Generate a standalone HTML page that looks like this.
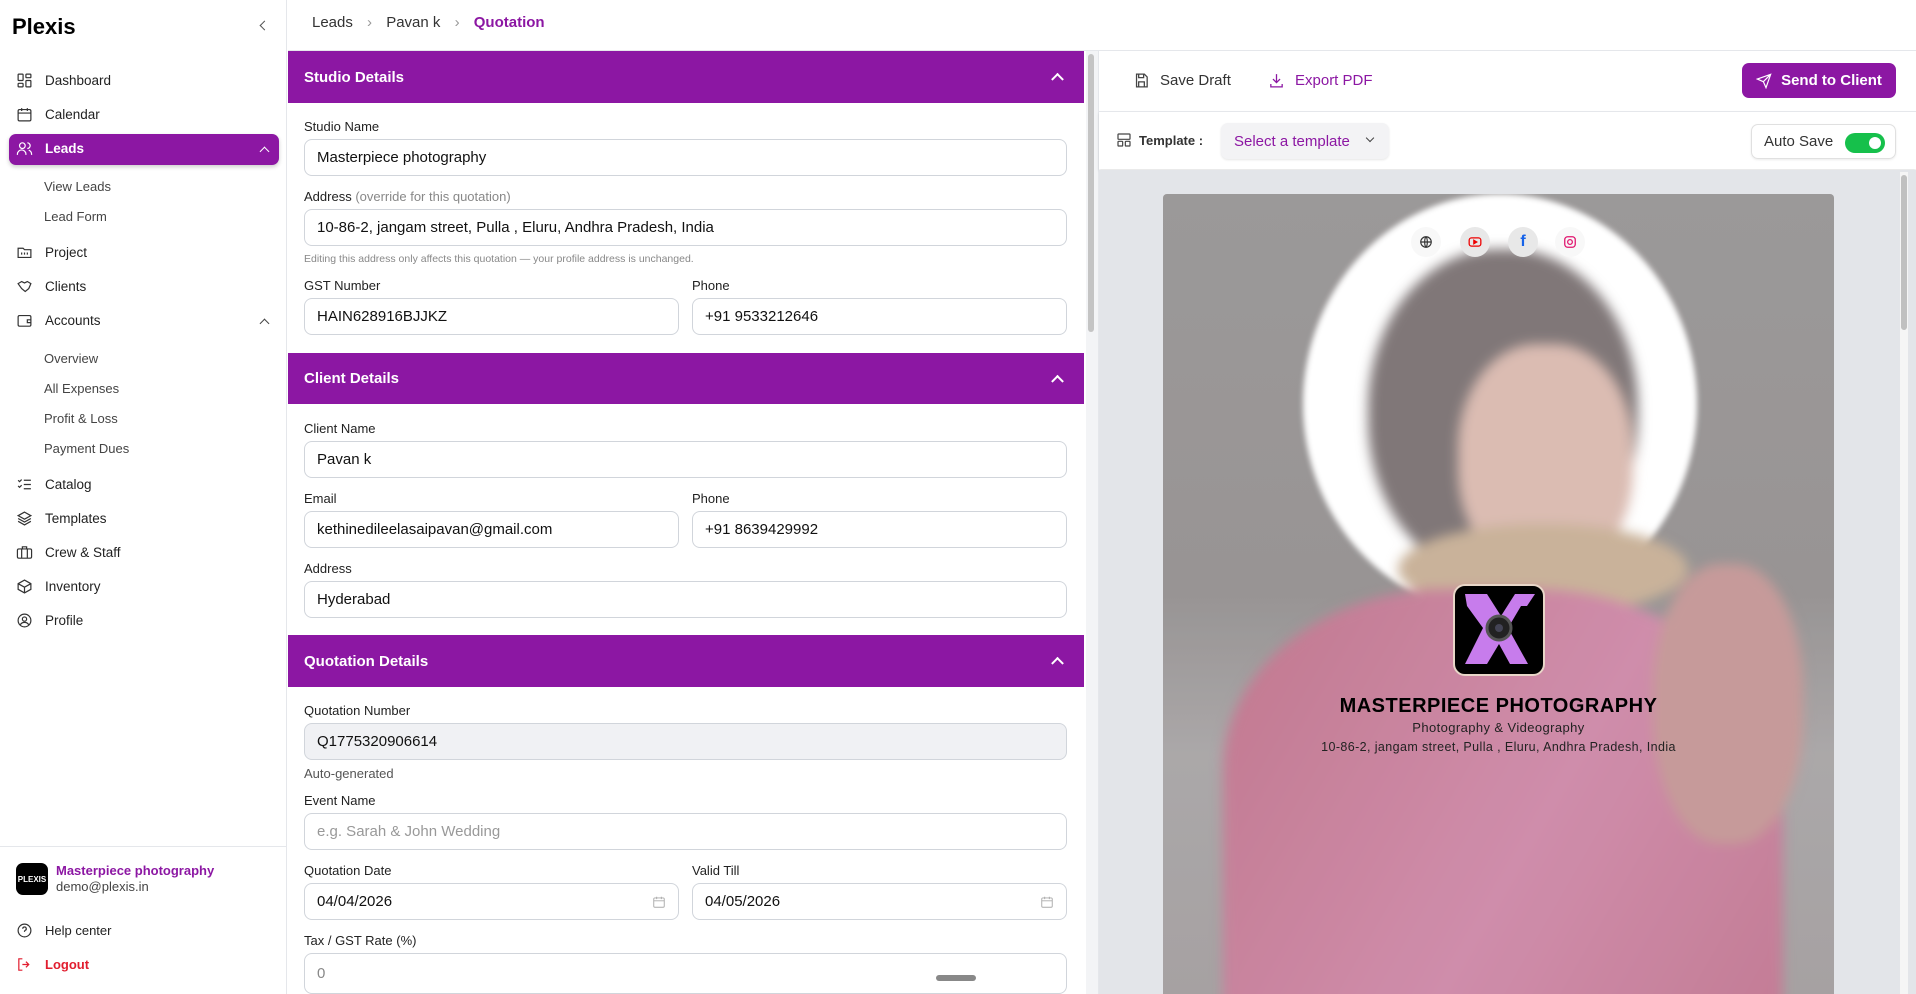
<!DOCTYPE html>
<html><head><meta charset="utf-8"><style>
*{box-sizing:border-box;margin:0;padding:0}
html,body{width:1916px;height:994px;overflow:hidden}
body{background:#fff;font-family:"Liberation Sans",sans-serif;color:#1f2937;position:relative}
.a{position:absolute}
.nav{position:absolute;left:16px;font-size:13.5px;color:#222;display:flex;align-items:center;gap:12px}
.nav svg{width:17px;height:17px;fill:none;stroke:#333;stroke-width:1.7}
.sub{position:absolute;left:44px;font-size:13px;color:#444}
.lbl{position:absolute;font-size:13px;color:#222}
.in{position:absolute;height:37px;border:1px solid #d1d5db;border-radius:8px;font-size:15px;padding:0 12px;display:flex;align-items:center;color:#111;background:#fff}
.sec{position:absolute;left:288px;width:796px;background:#8c17a3;color:#fff;font-weight:bold;font-size:15px;padding-left:16px;display:flex;align-items:center}
.sec:after{content:"";position:absolute;right:22px;top:50%;width:7px;height:7px;border-left:2px solid #fff;border-top:2px solid #fff;transform:translateY(-25%) rotate(45deg)}
</style></head><body>
<div class="a" style="left:0;top:0;width:287px;height:994px;border-right:1px solid #e5e7eb;background:#fff"></div>
<div class="a" style="left:12px;top:14px;font-size:22px;font-weight:bold;color:#000">Plexis</div>
<div class="a" style="left:261px;top:22px;width:7px;height:7px;border-left:1.5px solid #555;border-bottom:1.5px solid #555;transform:rotate(45deg)"></div>
<div class="nav" style="top:72px"><svg viewBox="0 0 24 24"><rect x="3" y="3" width="7" height="9" rx="1"/><rect x="14" y="3" width="7" height="5" rx="1"/><rect x="14" y="12" width="7" height="9" rx="1"/><rect x="3" y="16" width="7" height="5" rx="1"/></svg>Dashboard</div>
<div class="nav" style="top:106px"><svg viewBox="0 0 24 24"><rect x="3" y="5" width="18" height="16" rx="2"/><path d="M3 10h18M8 3v4M16 3v4"/></svg>Calendar</div>
<div class="a" style="left:9px;top:134px;width:270px;height:31px;background:#8c17a3;border-radius:7px;box-shadow:0 2px 4px rgba(0,0,0,.2)"></div>
<div class="nav" style="top:140px;color:#fff;font-weight:bold"><svg viewBox="0 0 24 24" style="stroke:#fff"><circle cx="9" cy="8" r="4"/><path d="M2 21v-1a6 6 0 0 1 12 0v1M16 4a4 4 0 0 1 0 8M22 21v-1a6 6 0 0 0-4-5.6"/></svg>Leads</div>
<div class="a" style="left:261px;top:148px;width:7px;height:7px;border-left:1.5px solid #fff;border-top:1.5px solid #fff;transform:rotate(45deg)"></div>
<div class="sub" style="top:179px">View Leads</div>
<div class="sub" style="top:209px">Lead Form</div>
<div class="nav" style="top:244px"><svg viewBox="0 0 24 24"><path d="M3 6h7l2 2h9v11H3z"/><path d="M8 12v3M12 12v3M16 12v3"/></svg>Project</div>
<div class="nav" style="top:278px"><svg viewBox="0 0 24 24"><path d="M3 8l5-3 4 2 4-2 5 3-3 7-5 4-5-4z"/></svg>Clients</div>
<div class="nav" style="top:312px"><svg viewBox="0 0 24 24"><rect x="3" y="5" width="18" height="15" rx="2"/><path d="M21 11h-5v4h5"/></svg>Accounts</div>
<div class="a" style="left:261px;top:320px;width:7px;height:7px;border-left:1.5px solid #444;border-top:1.5px solid #444;transform:rotate(45deg)"></div>
<div class="sub" style="top:351px">Overview</div>
<div class="sub" style="top:381px">All Expenses</div>
<div class="sub" style="top:411px">Profit &amp; Loss</div>
<div class="sub" style="top:441px">Payment Dues</div>
<div class="nav" style="top:476px"><svg viewBox="0 0 24 24"><path d="M3 6l2 2 3-3M3 14l2 2 3-3M11 6h10M11 12h10M11 18h10"/></svg>Catalog</div>
<div class="nav" style="top:510px"><svg viewBox="0 0 24 24"><path d="M12 3l9 5-9 5-9-5zM3 12l9 5 9-5M3 16l9 5 9-5"/></svg>Templates</div>
<div class="nav" style="top:544px"><svg viewBox="0 0 24 24"><rect x="2" y="7" width="20" height="13" rx="2"/><path d="M9 7V4h6v3M8 7v13M16 7v13"/></svg>Crew &amp; Staff</div>
<div class="nav" style="top:578px"><svg viewBox="0 0 24 24"><path d="M3 8l9-5 9 5v8l-9 5-9-5zM3 8l9 5 9-5M12 13v8"/></svg>Inventory</div>
<div class="nav" style="top:612px"><svg viewBox="0 0 24 24"><circle cx="12" cy="12" r="9"/><circle cx="12" cy="10" r="3"/><path d="M6 18a7 7 0 0 1 12 0"/></svg>Profile</div>
<div class="a" style="left:0;top:846px;width:287px;height:1px;background:#e5e7eb"></div>
<div class="a" style="left:16px;top:863px;width:32px;height:32px;border-radius:7px;background:#000;color:#fff;font-size:8px;font-weight:bold;display:flex;align-items:center;justify-content:center">PLEXIS</div>
<div class="a" style="left:56px;top:863px;font-size:13px;font-weight:bold;color:#8c17a3">Masterpiece photography</div>
<div class="a" style="left:56px;top:879px;font-size:13px;color:#444">demo@plexis.in</div>
<div class="nav" style="top:922px;font-size:13px"><svg viewBox="0 0 24 24"><circle cx="12" cy="12" r="9"/><path d="M9.5 9.5a2.5 2.5 0 1 1 3.5 2.3c-.6.3-1 .8-1 1.5v.7M12 17h.01"/></svg>Help center</div>
<div class="nav" style="top:956px;font-size:13px;color:#e11d2e;font-weight:bold"><svg viewBox="0 0 24 24" style="stroke:#e11d2e"><path d="M9 4H4v16h5M14 8l4 4-4 4M18 12H9"/></svg>Logout</div>

<div class="a" style="left:312px;top:14px;font-size:15px;color:#333">Leads <span style="color:#999;margin:0 10px">›</span> Pavan k <span style="color:#999;margin:0 10px">›</span> <span style="color:#8c17a3;font-weight:bold">Quotation</span></div>
<div class="a" style="left:288px;top:50px;width:1628px;height:1px;background:#e5e7eb"></div>

<div class="sec" style="top:51px;height:52px">Studio Details</div>
<div class="lbl" style="left:304px;top:119px">Studio Name</div>
<div class="in" style="left:304px;top:139px;width:763px">Masterpiece photography</div>
<div class="lbl" style="left:304px;top:189px">Address <span style="color:#888">(override for this quotation)</span></div>
<div class="in" style="left:304px;top:209px;width:763px">10-86-2, jangam street, Pulla , Eluru, Andhra Pradesh, India</div>
<div class="lbl" style="left:304px;top:253px;font-size:10.5px;color:#888">Editing this address only affects this quotation — your profile address is unchanged.</div>
<div class="lbl" style="left:304px;top:278px">GST Number</div>
<div class="lbl" style="left:692px;top:278px">Phone</div>
<div class="in" style="left:304px;top:298px;width:375px">HAIN628916BJJKZ</div>
<div class="in" style="left:692px;top:298px;width:375px">+91 9533212646</div>

<div class="sec" style="top:353px;height:51px">Client Details</div>
<div class="lbl" style="left:304px;top:421px">Client Name</div>
<div class="in" style="left:304px;top:441px;width:763px">Pavan k</div>
<div class="lbl" style="left:304px;top:491px">Email</div>
<div class="lbl" style="left:692px;top:491px">Phone</div>
<div class="in" style="left:304px;top:511px;width:375px">kethinedileelasaipavan@gmail.com</div>
<div class="in" style="left:692px;top:511px;width:375px">+91 8639429992</div>
<div class="lbl" style="left:304px;top:561px">Address</div>
<div class="in" style="left:304px;top:581px;width:763px">Hyderabad</div>

<div class="sec" style="top:635px;height:52px">Quotation Details</div>
<div class="lbl" style="left:304px;top:703px">Quotation Number</div>
<div class="in" style="left:304px;top:723px;width:763px;background:#f0f1f4">Q1775320906614</div>
<div class="lbl" style="left:304px;top:766px;color:#555">Auto-generated</div>
<div class="lbl" style="left:304px;top:793px">Event Name</div>
<div class="in" style="left:304px;top:813px;width:763px;color:#999">e.g. Sarah &amp; John Wedding</div>
<div class="lbl" style="left:304px;top:863px">Quotation Date</div>
<div class="lbl" style="left:692px;top:863px">Valid Till</div>
<div class="in" style="left:304px;top:883px;width:375px">04/04/2026<svg style="position:absolute;right:12px;top:11px" width="14" height="14" viewBox="0 0 24 24" fill="none" stroke="#aaa" stroke-width="1.6"><rect x="3" y="5" width="18" height="16" rx="2"/><path d="M3 10h18M8 3v4M16 3v4"/></svg></div>
<div class="in" style="left:692px;top:883px;width:375px">04/05/2026<svg style="position:absolute;right:12px;top:11px" width="14" height="14" viewBox="0 0 24 24" fill="none" stroke="#aaa" stroke-width="1.6"><rect x="3" y="5" width="18" height="16" rx="2"/><path d="M3 10h18M8 3v4M16 3v4"/></svg></div>
<div class="lbl" style="left:304px;top:933px">Tax / GST Rate (%)</div>
<div class="in" style="left:304px;top:953px;width:763px;height:41px;color:#888">0</div>
<div class="a" style="left:936px;top:975px;width:40px;height:6px;border-radius:3px;background:#888"></div>
<div class="a" style="left:1086px;top:51px;width:12px;height:943px;background:#f3f4f6"></div>
<div class="a" style="left:1088px;top:54px;width:6px;height:278px;border-radius:3px;background:#c4c4c4"></div>
<div class="a" style="left:1098px;top:51px;width:1px;height:943px;background:#e5e7eb"></div>

<div class="a" style="left:1133px;top:72px;font-size:15px;color:#333;display:flex;align-items:center;gap:10px"><svg width="17" height="17" viewBox="0 0 24 24" fill="none" stroke="#444" stroke-width="1.8"><path d="M5 3h11l4 4v14H5z"/><path d="M8 3v5h7V3M8 21v-7h8v7"/></svg>Save Draft</div>
<div class="a" style="left:1268px;top:72px;font-size:15px;color:#8c17a3;display:flex;align-items:center;gap:10px"><svg width="17" height="17" viewBox="0 0 24 24" fill="none" stroke="#8c17a3" stroke-width="1.8"><path d="M12 3v12M7 10l5 5 5-5M4 17v4h16v-4"/></svg>Export PDF</div>
<div class="a" style="left:1742px;top:63px;width:154px;height:35px;border-radius:7px;background:#8c17a3;color:#fff;font-size:15px;font-weight:bold;display:flex;align-items:center;justify-content:center;gap:9px"><svg width="16" height="16" viewBox="0 0 24 24" fill="none" stroke="#fff" stroke-width="1.8"><path d="M22 2L11 13M22 2l-7 20-4-9-9-4z"/></svg>Send to Client</div>
<div class="a" style="left:1099px;top:111px;width:817px;height:58px;background:#fff;box-shadow:0 2px 3px rgba(0,0,0,.1);border-top:1px solid #e5e7eb"></div>
<div class="a" style="left:1116px;top:132px;font-size:13px;font-weight:bold;color:#333;display:flex;align-items:center;gap:7px"><svg width="16" height="16" viewBox="0 0 24 24" fill="none" stroke="#444" stroke-width="1.8"><rect x="3" y="3" width="18" height="8" rx="1"/><rect x="3" y="14" width="7" height="7" rx="1"/><rect x="14" y="14" width="7" height="7" rx="1"/></svg>Template :</div>
<div class="a" style="left:1221px;top:123px;width:168px;height:36px;border-radius:7px;background:#f3f3f5;box-shadow:0 1px 2px rgba(0,0,0,.1);color:#8c17a3;font-size:15px;display:flex;align-items:center;padding-left:13px">Select a template<span style="position:absolute;right:16px;top:12px;width:6px;height:6px;border-right:1.5px solid #444;border-bottom:1.5px solid #444;transform:rotate(45deg)"></span></div>
<div class="a" style="left:1751px;top:124px;width:145px;height:35px;border-radius:7px;border:1px solid #e0e0e0;box-shadow:0 1px 2px rgba(0,0,0,.08);font-size:15px;color:#333;display:flex;align-items:center;padding-left:12px">Auto Save<span style="position:absolute;right:10px;top:8px;width:40px;height:20px;border-radius:10px;background:#16c04b"><span style="position:absolute;right:4px;top:4px;width:12px;height:12px;border-radius:50%;background:#fff"></span></span></div>

<div class="a" style="left:1099px;top:170px;width:817px;height:824px;background:#e3e5e9"></div>
<div class="a" style="left:1900px;top:172px;width:8px;height:822px;background:#f5f5f5"></div>
<div class="a" style="left:1901px;top:175px;width:6px;height:155px;border-radius:3px;background:#c0c0c0"></div>
<div class="a" style="left:1163px;top:194px;width:671px;height:800px;overflow:hidden;border-radius:4px 4px 0 0;background:linear-gradient(#8e8b8b,#8a8686 50%,#a09c9d 70%,#9a9596)">
  <div class="a" style="left:140px;top:0;width:394px;height:420px;border-radius:50%;background:#fff;filter:blur(3px)"></div>
  <div style="position:absolute;left:0;top:0;width:671px;height:800px;filter:blur(6px)">
    <div class="a" style="left:205px;top:55px;width:270px;height:330px;border-radius:48%;background:#6f6566"></div>
    <div class="a" style="left:295px;top:150px;width:175px;height:230px;border-radius:45%;background:#d6b3a8"></div>
    <div class="a" style="left:235px;top:330px;width:290px;height:90px;border-radius:50%;background:#c2a88c"></div>
    <div class="a" style="left:60px;top:395px;width:560px;height:450px;border-radius:40% 45% 0 0;background:linear-gradient(120deg,#b9667f,#c97ea0 55%,#bb6a86)"></div>
    <div class="a" style="left:490px;top:370px;width:150px;height:280px;border-radius:45%;background:#bf8d8c"></div>
  </div>
  <div class="a" style="left:0;top:0;width:671px;height:800px;background:rgba(255,255,255,.12)"></div>
  <div class="a" style="left:248px;top:33px;width:30px;height:30px;border-radius:50%;background:#f8f8f8;display:flex;align-items:center;justify-content:center"><svg width="14" height="14" viewBox="0 0 24 24" fill="none" stroke="#333" stroke-width="2"><circle cx="12" cy="12" r="9"/><path d="M3 12h18M12 3c3 3 3 15 0 18M12 3c-3 3-3 15 0 18"/></svg></div>
  <div class="a" style="left:297px;top:33px;width:30px;height:30px;border-radius:50%;background:#e8e8e8;display:flex;align-items:center;justify-content:center"><svg width="14" height="14" viewBox="0 0 24 24" fill="none" stroke="#e00" stroke-width="2.2"><rect x="2" y="5" width="20" height="14" rx="4"/><path d="M10 9l5 3-5 3z" fill="#e00"/></svg></div>
  <div class="a" style="left:345px;top:33px;width:30px;height:30px;border-radius:50%;background:#e8e8e8;display:flex;align-items:center;justify-content:center;color:#1763e8;font-weight:bold;font-size:16px">f</div>
  <div class="a" style="left:392px;top:33px;width:30px;height:30px;border-radius:50%;background:#f8f8f8;display:flex;align-items:center;justify-content:center"><svg width="14" height="14" viewBox="0 0 24 24" fill="none" stroke="#e0156e" stroke-width="2.2"><rect x="3" y="3" width="18" height="18" rx="5"/><circle cx="12" cy="12" r="4"/></svg></div>
  <div class="a" style="left:290px;top:390px;width:92px;height:92px;border-radius:12px;background:#000;border:2px solid #e8d6c8;overflow:hidden">
    <svg width="88" height="88" viewBox="0 0 88 88"><path d="M10 8h22l14 22 14-22h20l-8 12H66L53 42l20 36H55L44 58 32 78H10l18-36L12 20z" fill="#c77cec"/><circle cx="44" cy="42" r="12" fill="#222" stroke="#555" stroke-width="3"/><circle cx="44" cy="42" r="4" fill="#445"/></svg>
  </div>
  <div class="a" style="left:0;width:671px;top:501px;text-align:center;font-size:20px;font-weight:bold;color:#000;letter-spacing:.5px">MASTERPIECE PHOTOGRAPHY</div>
  <div class="a" style="left:0;width:671px;top:526px;text-align:center;font-size:13px;color:#222;letter-spacing:.4px">Photography &amp; Videography</div>
  <div class="a" style="left:0;width:671px;top:546px;text-align:center;font-size:12.5px;color:#222;letter-spacing:.4px">10-86-2, jangam street, Pulla , Eluru, Andhra Pradesh, India</div>
</div>
</body></html>
